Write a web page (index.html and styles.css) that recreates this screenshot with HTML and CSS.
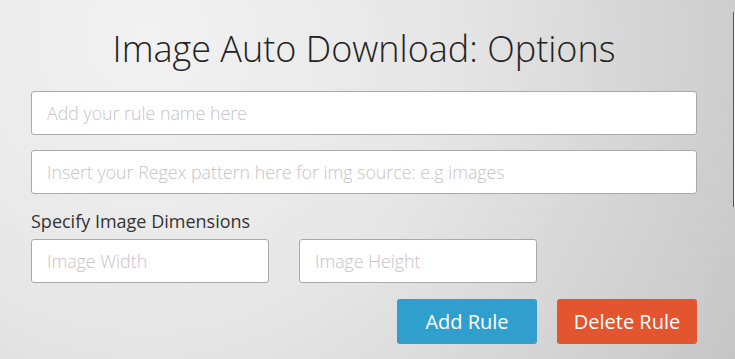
FILE: index.html
```html
<!DOCTYPE html>
<html lang="en">
<head>
    <meta charset="UTF-8">
    <meta name="viewport" content="width=device-width, initial-scale=1.0">
    <title>Image Auto Download: Options</title>
    <link rel="stylesheet" href="styles.css">
</head>
<body>
    <div class="options">
        <h1>Image Auto Download: Options</h1>
        <input class="field" type="text" placeholder="Add your rule name here">
        <input class="field" type="text" placeholder="Insert your Regex pattern here for img source: e.g images">
        <p class="label">Specify Image Dimensions</p>
        <div class="dimensions">
            <input class="field small" type="text" placeholder="Image Width">
            <input class="field small" type="text" placeholder="Image Height">
        </div>
        <div class="actions">
            <button class="btn add-button">Add Rule</button>
            <button class="btn delete-button">Delete Rule</button>
        </div>
    </div>
    <div class="edge"></div>
</body>
</html>
```
FILE: styles.css
```css
html, body {
    height: 100%;
}

body {
    margin: 0;
    font-family: "Open Sans", Arial, sans-serif;
    background: radial-gradient(circle at 20% 10%, #f2f2f2 0%, #e6e6e6 45%, #c6c6c6 100%);
    overflow: hidden;
    position: relative;
}

.options {
    width: 666px;
    margin-left: 31px;
    display: flex;
    flex-direction: column;
}

h1 {
    margin: 27px 0 20px;
    font-size: 36px;
    line-height: 44px;
    font-weight: 300;
    color: #222;
    text-align: center;
}

.field {
    box-sizing: border-box;
    height: 44px;
    width: 100%;
    padding: 0 15px;
    border: 1px solid #a9a9a9;
    border-radius: 3px;
    background-color: white;
    font-family: "Open Sans", Arial, sans-serif;
    font-size: 17.8px;
    font-weight: 300;
    color: #333;
    margin: 0 0 15px;
}

.field::placeholder {
    color: #c9c2c9;
    font-weight: 300;
}

.label {
    margin: 0 0 6px;
    font-size: 18px;
    line-height: 24px;
    color: #333;
}

.dimensions {
    display: flex;
    gap: 30px;
    margin-bottom: 16px;
}

.field.small {
    width: 238px;
    margin: 0;
}

.actions {
    display: flex;
    justify-content: flex-end;
    gap: 20px;
}

.btn {
    width: 140px;
    height: 45px;
    border: none;
    border-radius: 3px;
    color: white;
    font-family: "Open Sans", Arial, sans-serif;
    font-size: 20px;
    cursor: pointer;
}

.add-button {
    background-color: #319fcd;
}

.delete-button {
    background-color: #e2552f;
}

.edge {
    position: absolute;
    top: 12px;
    right: 0;
    width: 1px;
    height: 195px;
    border-left: 1px solid #555;
    background-color: #f4f4f4;
}
```
